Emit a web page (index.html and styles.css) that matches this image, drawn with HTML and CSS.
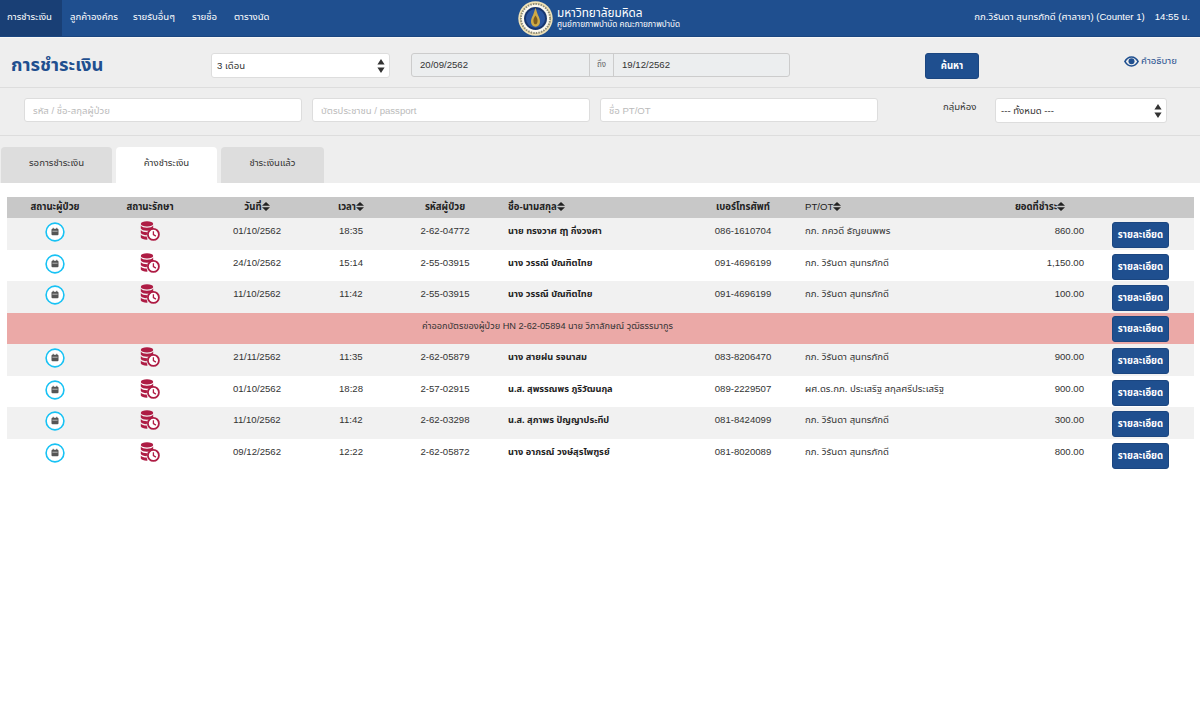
FILE: index.html
```html
<!DOCTYPE html>
<html lang="th">
<head>
  <meta charset="UTF-8" />
  <meta name="viewport" content="width=device-width, initial-scale=1.0" />
  <title>การชำระเงิน</title>
  <link rel="stylesheet" href="styles.css">
</head>
<body>
  <svg class="defs" width="0" height="0">
    <symbol id="sort" viewBox="0 0 8 9">
      <path d="M4 0l4 3.800H0zM4 9L0 5.200h8z" fill="currentColor"/>
    </symbol>
    <symbol id="arrows" viewBox="0 0 8 14">
      <path d="M4 0l3.600 5.600H.4zM4 14L.4 8.400h7.200z" fill="#333"/>
    </symbol>
    <symbol id="cal" viewBox="0 0 20 20">
      <circle cx="10" cy="10" r="8.900" fill="#fff" stroke="#18c2f4" stroke-width="1.600"/>
      <rect x="6.500" y="6.800" width="7" height="6.500" rx="1" fill="#555"/>
      <rect x="7.400" y="8.800" width="5.200" height=".7" fill="#ddd"/>
      <rect x="7.700" y="5.800" width="1" height="1.700" fill="#555"/>
      <rect x="11.300" y="5.800" width="1" height="1.700" fill="#555"/>
    </symbol>
    <symbol id="coins" viewBox="0 0 20 20">
      <g fill="#ae1c44">
        <ellipse cx="7" cy="2.900" rx="6.200" ry="2.700"/>
        <path d="M.8 4.600c1 1.500 3.300 2.200 6.200 2.200s5.200-.7 6.200-2.200v2.900c-1 1.500-3.300 2.200-6.200 2.200S1.800 9 .8 7.500z"/>
        <path d="M.8 9c1 1.500 3.300 2.200 6.200 2.200h.6l-1 3c-2.800 0-4.900-.8-5.800-2.200z"/>
        <path d="M.8 13.400c1 1.400 3 2.100 5.800 2.200l1 3c-3.400.2-5.800-.7-6.800-2.200z"/>
      </g>
      <circle cx="13.400" cy="13.400" r="5.500" fill="#fff" stroke="#ae1c44" stroke-width="1.800"/>
      <path d="M13.400 10.300v3.300l2.500 1.500" fill="none" stroke="#ae1c44" stroke-width="1.300"/>
    </symbol>
  </svg>

  <header class="topbar">
    <nav class="menu">
      <a class="menu-item active">การชำระเงิน</a>
      <a class="menu-item">ลูกค้าองค์กร</a>
      <a class="menu-item">รายรับอื่นๆ</a>
      <a class="menu-item">รายชื่อ</a>
      <a class="menu-item">ตารางนัด</a>
    </nav>
    <div class="brand">
      <svg class="logo" width="35" height="35" viewBox="0 0 36 36">
        <circle cx="18" cy="18" r="17.700" fill="#efe2b8"/>
        <circle cx="18" cy="18" r="15.600" fill="#fbf8ee" stroke="#c9a95a" stroke-width=".6"/>
        <circle cx="18" cy="18" r="15" fill="none" stroke="#8a8a7a" stroke-width="2" stroke-dasharray="1.500 1.200"/>
        <circle cx="18" cy="18" r="11.800" fill="#17356f"/>
        <circle cx="18" cy="18" r="9.800" fill="#2a55a0"/>
        <path d="M18 7c1 3 1.500 5 2.500 7.500 1.500 3 2.500 5 2 8-.5 2-2.500 4-4.500 4s-4-2-4.500-4c-.5-3 .5-5 2-8C16.500 12 17 10 18 7z" fill="#d0aa45"/>
        <path d="M18 15c1.500 2 2.500 4 2 6.500-.3 1.500-1 2.500-2 2.500s-1.700-1-2-2.500c-.5-2.500.5-4.500 2-6.500z" fill="#7d5b1e"/>
      </svg>
      <div class="brand-text">
        <div class="brand-name">มหาวิทยาลัยมหิดล</div>
        <div class="brand-sub">ศูนย์กายภาพบำบัด คณะกายภาพบำบัด</div>
      </div>
    </div>
    <div class="user">
      <span>กภ.วิรันดา สุนทรภักดี (ศาลายา) (Counter 1)</span>
      <span>14:55 น.</span>
    </div>
  </header>

  <section class="title-row">
    <h1>การชำระเงิน</h1>
    <div class="select range-select">3 เดือน
      <svg class="arrows" width="8" height="14"><use href="#arrows"/></svg>
    </div>
    <div class="dates">
      <div class="date-box from">20/09/2562</div>
      <div class="date-to">ถึง</div>
      <div class="date-box">19/12/2562</div>
    </div>
    <button class="btn search-btn">ค้นหา</button>
    <a class="help">
      <svg width="15" height="11" viewBox="0 0 16 11">
        <path d="M8 0C4.500 0 1.700 2.200 0 5.500 1.700 8.800 4.500 11 8 11s6.300-2.200 8-5.500C14.300 2.200 11.500 0 8 0zm0 9.500C5.500 9.500 3.300 8 2 5.500 3.300 3 5.500 1.500 8 1.500s4.700 1.500 6 4C12.700 8 10.500 9.500 8 9.500z" fill="#1f4f8f"/>
        <circle cx="8" cy="5.300" r="3.200" fill="#1f4f8f"/>
      </svg>
      คำอธิบาย
    </a>
  </section>

  <section class="filter-row">
    <input class="field" placeholder="รหัส / ชื่อ-สกุลผู้ป่วย" />
    <input class="field" placeholder="บัตรประชาชน / passport" />
    <input class="field" placeholder="ชื่อ PT/OT" />
    <label class="room-label">กลุ่มห้อง</label>
    <div class="select room-select">--- ทั้งหมด ---
      <svg class="arrows" width="8" height="14"><use href="#arrows"/></svg>
    </div>
  </section>

  <div class="tabs">
    <a class="tab tab-wait">รอการชำระเงิน</a>
    <a class="tab tab-current">ค้างชำระเงิน</a>
    <a class="tab tab-done">ชำระเงินแล้ว</a>
  </div>

  <main class="content">
    <table class="pay-table">
      <colgroup>
        <col class="c-a"><col class="c-b"><col class="c-c"><col class="c-d"><col class="c-e">
        <col class="c-f"><col class="c-g"><col class="c-h"><col class="c-i"><col class="c-j">
      </colgroup>
      <thead>
        <tr>
          <th>สถานะผู้ป่วย</th>
          <th>สถานะรักษา</th>
          <th>วันที่<svg class="sort"><use href="#sort"/></svg></th>
          <th>เวลา<svg class="sort"><use href="#sort"/></svg></th>
          <th>รหัสผู้ป่วย</th>
          <th class="left">ชื่อ-นามสกุล<svg class="sort"><use href="#sort"/></svg></th>
          <th>เบอร์โทรศัพท์</th>
          <th class="left pt">PT/OT<svg class="sort"><use href="#sort"/></svg></th>
          <th>ยอดที่ชำระ<svg class="sort"><use href="#sort"/></svg></th>
          <th></th>
        </tr>
      </thead>
      <tbody>
        <tr>
          <td><svg class="ico-cal"><use href="#cal"/></svg></td>
          <td><svg class="ico-coin"><use href="#coins"/></svg></td>
          <td>01/10/2562</td><td>18:35</td><td>2-62-04772</td>
          <td class="name">นาย ทรงวาศ ฤๅ กิ่งวงศา</td>
          <td>086-1610704</td>
          <td class="pt">กภ. ภควดี ธัญยนพพร</td>
          <td class="amount">860.00</td>
          <td class="action"><button class="btn">รายละเอียด</button></td>
        </tr>
        <tr>
          <td><svg class="ico-cal"><use href="#cal"/></svg></td>
          <td><svg class="ico-coin"><use href="#coins"/></svg></td>
          <td>24/10/2562</td><td>15:14</td><td>2-55-03915</td>
          <td class="name">นาง วรรณี บัณฑิตไทย</td>
          <td>091-4696199</td>
          <td class="pt">กภ. วิรันดา สุนทรภักดี</td>
          <td class="amount">1,150.00</td>
          <td class="action"><button class="btn">รายละเอียด</button></td>
        </tr>
        <tr>
          <td><svg class="ico-cal"><use href="#cal"/></svg></td>
          <td><svg class="ico-coin"><use href="#coins"/></svg></td>
          <td>11/10/2562</td><td>11:42</td><td>2-55-03915</td>
          <td class="name">นาง วรรณี บัณฑิตไทย</td>
          <td>091-4696199</td>
          <td class="pt">กภ. วิรันดา สุนทรภักดี</td>
          <td class="amount">100.00</td>
          <td class="action"><button class="btn">รายละเอียด</button></td>
        </tr>
        <tr class="card-row">
          <td colspan="9">ค่าออกบัตรของผู้ป่วย HN 2-62-05894 นาย วิภาลักษณ์ วุฒิธรรมากูร</td>
          <td class="action"><button class="btn">รายละเอียด</button></td>
        </tr>
        <tr>
          <td><svg class="ico-cal"><use href="#cal"/></svg></td>
          <td><svg class="ico-coin"><use href="#coins"/></svg></td>
          <td>21/11/2562</td><td>11:35</td><td>2-62-05879</td>
          <td class="name">นาง สายฝน รจนาสม</td>
          <td>083-8206470</td>
          <td class="pt">กภ. วิรันดา สุนทรภักดี</td>
          <td class="amount">900.00</td>
          <td class="action"><button class="btn">รายละเอียด</button></td>
        </tr>
        <tr>
          <td><svg class="ico-cal"><use href="#cal"/></svg></td>
          <td><svg class="ico-coin"><use href="#coins"/></svg></td>
          <td>01/10/2562</td><td>18:28</td><td>2-57-02915</td>
          <td class="name">น.ส. สุพรรณพร ภูริวัฒนกุล</td>
          <td>089-2229507</td>
          <td class="pt">ผศ.ดร.กภ. ประเสริฐ สกุลศรีประเสริฐ</td>
          <td class="amount">900.00</td>
          <td class="action"><button class="btn">รายละเอียด</button></td>
        </tr>
        <tr>
          <td><svg class="ico-cal"><use href="#cal"/></svg></td>
          <td><svg class="ico-coin"><use href="#coins"/></svg></td>
          <td>11/10/2562</td><td>11:42</td><td>2-62-03298</td>
          <td class="name">น.ส. สุภาพร ปัญญาประทีป</td>
          <td>081-8424099</td>
          <td class="pt">กภ. วิรันดา สุนทรภักดี</td>
          <td class="amount">300.00</td>
          <td class="action"><button class="btn">รายละเอียด</button></td>
        </tr>
        <tr>
          <td><svg class="ico-cal"><use href="#cal"/></svg></td>
          <td><svg class="ico-coin"><use href="#coins"/></svg></td>
          <td>09/12/2562</td><td>12:22</td><td>2-62-05872</td>
          <td class="name">นาง อาภรณ์ วงษ์สุรไพฑูรย์</td>
          <td>081-8020089</td>
          <td class="pt">กภ. วิรันดา สุนทรภักดี</td>
          <td class="amount">800.00</td>
          <td class="action"><button class="btn">รายละเอียด</button></td>
        </tr>
      </tbody>
    </table>
  </main>
</body>
</html>
```

FILE: styles.css
```css
* { box-sizing: border-box; }
html, body { height: 100%; }
body { margin: 0; background: #fff; color: #333; font-family: "Liberation Sans", "Noto Sans Thai", sans-serif; font-size: 9.6px; }
.defs { position: absolute; }

.topbar { height: 37px; background: #1f4f8f; border-bottom: 1px solid #1b4680; color: #fff; display: grid; grid-template-columns: 1fr auto 1fr; align-items: center; }
.menu { display: grid; grid-template-columns: 70px 63px 59px 42px 50px; height: 36px; }
.menu-item { display: flex; align-items: center; padding: 0 0 3px; white-space: nowrap; }
.menu-item.active { background: #193f75; width: 62px; padding-left: 7px; }
.brand { display: flex; align-items: center; gap: 4px; margin-right: 2px; }
.logo { display: block; }
.brand-name { font-size: 11.800px; line-height: 14px; }
.brand-sub { font-size: 8.200px; line-height: 10px; }
.user { display: flex; justify-content: flex-end; gap: 10px; padding: 0 10px 3px 0; }

.title-row { height: 51px; background: #eee; border-top: 1px solid #f7f7f7; border-bottom: 1px solid #ddd; display: flex; align-items: flex-start; padding: 15px 0 0 11px; }
h1 { margin: 0; width: 200px; font-size: 18.400px; line-height: 24px; font-weight: 700; color: #1f4f8f; }
.select { position: relative; height: 25px; background: #fff; border: 1px solid #ddd; border-radius: 3px; color: #333; display: flex; align-items: center; padding-left: 5px; }
.arrows { position: absolute; right: 4px; top: 5px; }
.range-select { width: 179px; }
.dates { display: flex; width: 379px; height: 24px; margin-left: 21px; border: 1px solid #ccc; border-radius: 3px; background: #eceeef; }
.date-box { flex: 1; padding-left: 8px; line-height: 22px; }
.date-box.from { flex: 0 0 177px; }
.date-to { flex: 0 0 25px; text-align: center; line-height: 22px; font-size: 8px; color: #666; border-left: 1px solid #ccc; border-right: 1px solid #ccc; }
.btn { height: 26px; width: 57px; padding: 0; background: #1f4f8f; border: 1px solid #1b4680; border-radius: 3px; color: #fff; font: 700 9.600px "Liberation Sans", "Noto Sans Thai", sans-serif; }
.search-btn { width: 54px; margin-left: 135px; }
.help { margin-left: 145px; margin-top: 1px; display: flex; align-items: center; gap: 2px; color: #1f4f8f; white-space: nowrap; }

.filter-row { height: 48px; background: #eee; border-bottom: 1px solid #ddd; display: flex; align-items: flex-start; padding: 10px 0 0 24px; }
.field { width: 278px; height: 24px; margin-right: 10px; padding: 0 8px; background: #fff; border: 1px solid #ddd; border-radius: 3px; font: 9.600px "Liberation Sans", "Noto Sans Thai", sans-serif; }
.field::placeholder { color: #bbb; }
.room-label { margin-left: 55px; width: 52px; line-height: 18px; }
.room-select { width: 172px; }

.tabs { height: 47px; background: #eee; display: flex; align-items: flex-end; padding-left: 1px; gap: 4px; }
.tab { height: 36px; background: #ddd; border-radius: 4px 4px 0 0; text-align: center; line-height: 32px; }
.tab-wait { width: 111px; }
.tab-current { width: 101px; background: #fff; }
.tab-done { width: 103px; }

.content { padding: 14px 6px 0 7px; }
.pay-table { width: 100%; table-layout: fixed; border-collapse: collapse; }
.c-a { width: 96px; }
.c-b { width: 94px; }
.c-c { width: 120px; }
.c-d { width: 68px; }
.c-e { width: 120px; }
.c-f { width: 195px; }
.c-g { width: 86px; }
.c-h { width: 190px; }
.c-i { width: 128px; }
.c-j { width: 90px; }
th { height: 21px; padding: 0 0 2px; background: #c8c8c8; font-weight: 700; color: #222; text-align: center; white-space: nowrap; }
th.left { text-align: left; padding-left: 3px; }
th.pt { padding-left: 19px; font-weight: 400; }
.sort { width: 8px; height: 9px; vertical-align: -1px; }
td { height: 31.500px; padding: 6px 0 0; vertical-align: top; text-align: center; white-space: nowrap; color: #333; line-height: 14px; }
tbody tr:nth-child(odd) { background: #f1f1f1; }
tbody tr:nth-child(even) { background: #fff; }
tbody tr.card-row { background: #eba9a7; }
td.name { text-align: left; padding-left: 3px; font-weight: 700; font-size: 9.200px; color: #222; }
td.pt { text-align: left; padding-left: 19px; }
td.amount { text-align: right; padding-right: 20px; }
td.action { text-align: left; padding: 4px 0 0 8px; }
.card-row td { padding: 6px 16px 0 0; font-size: 9.200px; }
.card-row td.action { padding: 3px 0 0 8px; }
.ico-cal { width: 20px; height: 20px; margin-top: -2px; display: inline-block; }
.ico-coin { width: 20px; height: 20px; margin-top: -3px; margin-left: -1px; display: inline-block; }
```
